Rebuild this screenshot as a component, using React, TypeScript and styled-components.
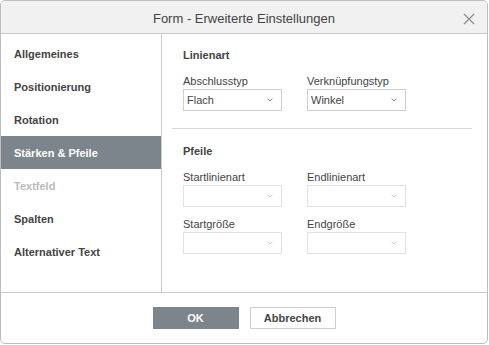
import React from "react";
import styled, { createGlobalStyle } from "styled-components";

const Global = createGlobalStyle`
  html, body { margin: 0; padding: 0; background: #ffffff; }
  body { font-family: "Liberation Sans", Arial, sans-serif; color: #444444; }
`;

const Dialog = styled.div`
  width: 488px;
  height: 344px;
  box-sizing: border-box;
  border: 1px solid #bdbdbd;
  border-radius: 5px;
  background: #ffffff;
  display: flex;
  flex-direction: column;
  overflow: hidden;
`;

const Header = styled.div`
  height: 32px;
  flex: 0 0 auto;
  background: #f1f1f1;
  border-bottom: 1px solid #c8c8c8;
  display: flex;
  align-items: center;
  justify-content: center;
  position: relative;
`;

const Title = styled.div`
  font-size: 13px;
  color: #444444;
  padding-top: 2px;
`;

const Close = styled.div`
  position: absolute;
  right: 12px;
  top: 12px;
  width: 12px;
  height: 12px;
  display: flex;
`;

const Body = styled.div`
  flex: 1 1 auto;
  display: flex;
  min-height: 0;
`;

const Sidebar = styled.div`
  width: 160px;
  flex: 0 0 auto;
  border-right: 1px solid #cbcbcb;
  padding-top: 3px;
  display: flex;
  flex-direction: column;
`;

const NavItem = styled.div<{ $active?: boolean; $disabled?: boolean }>`
  height: 33px;
  display: flex;
  align-items: center;
  padding-left: 13px;
  font-size: 11px;
  font-weight: bold;
  background: ${(p) => (p.$active ? "#7d858c" : "transparent")};
  color: ${(p) => (p.$active ? "#ffffff" : p.$disabled ? "#bbbbbb" : "#444444")};
`;

const Panel = styled.div`
  flex: 1 1 auto;
  padding: 14px 15px 0 21px;
  display: flex;
  flex-direction: column;
`;

const Heading = styled.div`
  font-size: 11px;
  font-weight: bold;
  line-height: 14px;
  color: #444444;
  margin-bottom: 12px;
`;

const Row = styled.div<{ $gapBelow?: number }>`
  display: grid;
  grid-template-columns: 124px 124px;
  margin-bottom: ${(p) => p.$gapBelow ?? 0}px;
`;

const Field = styled.div`
  display: flex;
  flex-direction: column;
`;

const Label = styled.div`
  font-size: 11px;
  line-height: 14px;
  color: #444444;
  margin-bottom: 1px;
`;

const SelectBox = styled.div<{ $disabled?: boolean }>`
  width: 99px;
  height: 22px;
  box-sizing: border-box;
  border: 1px solid ${(p) => (p.$disabled ? "#e2e2e2" : "#cfcfcf")};
  display: flex;
  align-items: center;
  justify-content: space-between;
  padding: 0 8px 0 3px;
  font-size: 11px;
  color: #444444;
`;

const Separator = styled.div`
  height: 1px;
  background: #d5d5d5;
  margin: 17px 0 15px -11px;
`;

const Footer = styled.div`
  flex: 0 0 auto;
  height: 50px;
  border-top: 1px solid #cbcbcb;
  display: flex;
  align-items: center;
  justify-content: center;
  gap: 11px;
`;

const Button = styled.div<{ $primary?: boolean }>`
  width: 86px;
  height: 22px;
  box-sizing: border-box;
  display: flex;
  align-items: center;
  justify-content: center;
  font-size: 11px;
  font-weight: bold;
  background: ${(p) => (p.$primary ? "#7d858c" : "#ffffff")};
  color: ${(p) => (p.$primary ? "#ffffff" : "#444444")};
  border: 1px solid ${(p) => (p.$primary ? "#7d858c" : "#cfcfcf")};
`;

const Chevron = ({ disabled }: { disabled?: boolean }) => (
  <svg width="6" height="4" viewBox="0 0 6 4">
    <path d="M0.5 0.5 L3 3 L5.5 0.5" fill="none" stroke={disabled ? "#cfcfcf" : "#8a8a8a"} strokeWidth="1" />
  </svg>
);

const Select = ({ value, disabled }: { value?: string; disabled?: boolean }) => (
  <SelectBox $disabled={disabled}>
    <span>{value ?? ""}</span>
    <Chevron disabled={disabled} />
  </SelectBox>
);

export default function App() {
  return (
    <>
      <Global />
      <Dialog>
        <Header>
          <Title>Form - Erweiterte Einstellungen</Title>
          <Close>
            <svg width="12" height="12" viewBox="0 0 12 12">
              <path d="M1 1 L11 11 M11 1 L1 11" stroke="#8c8c8c" strokeWidth="1.2" />
            </svg>
          </Close>
        </Header>
        <Body>
          <Sidebar>
            <NavItem>Allgemeines</NavItem>
            <NavItem>Positionierung</NavItem>
            <NavItem>Rotation</NavItem>
            <NavItem $active>Stärken &amp; Pfeile</NavItem>
            <NavItem $disabled>Textfeld</NavItem>
            <NavItem>Spalten</NavItem>
            <NavItem>Alternativer Text</NavItem>
          </Sidebar>
          <Panel>
            <Heading>Linienart</Heading>
            <Row>
              <Field>
                <Label>Abschlusstyp</Label>
                <Select value="Flach" />
              </Field>
              <Field>
                <Label>Verknüpfungstyp</Label>
                <Select value="Winkel" />
              </Field>
            </Row>
            <Separator />
            <Heading>Pfeile</Heading>
            <Row $gapBelow={10}>
              <Field>
                <Label>Startlinienart</Label>
                <Select disabled />
              </Field>
              <Field>
                <Label>Endlinienart</Label>
                <Select disabled />
              </Field>
            </Row>
            <Row>
              <Field>
                <Label>Startgröße</Label>
                <Select disabled />
              </Field>
              <Field>
                <Label>Endgröße</Label>
                <Select disabled />
              </Field>
            </Row>
          </Panel>
        </Body>
        <Footer>
          <Button $primary>OK</Button>
          <Button>Abbrechen</Button>
        </Footer>
      </Dialog>
    </>
  );
}
